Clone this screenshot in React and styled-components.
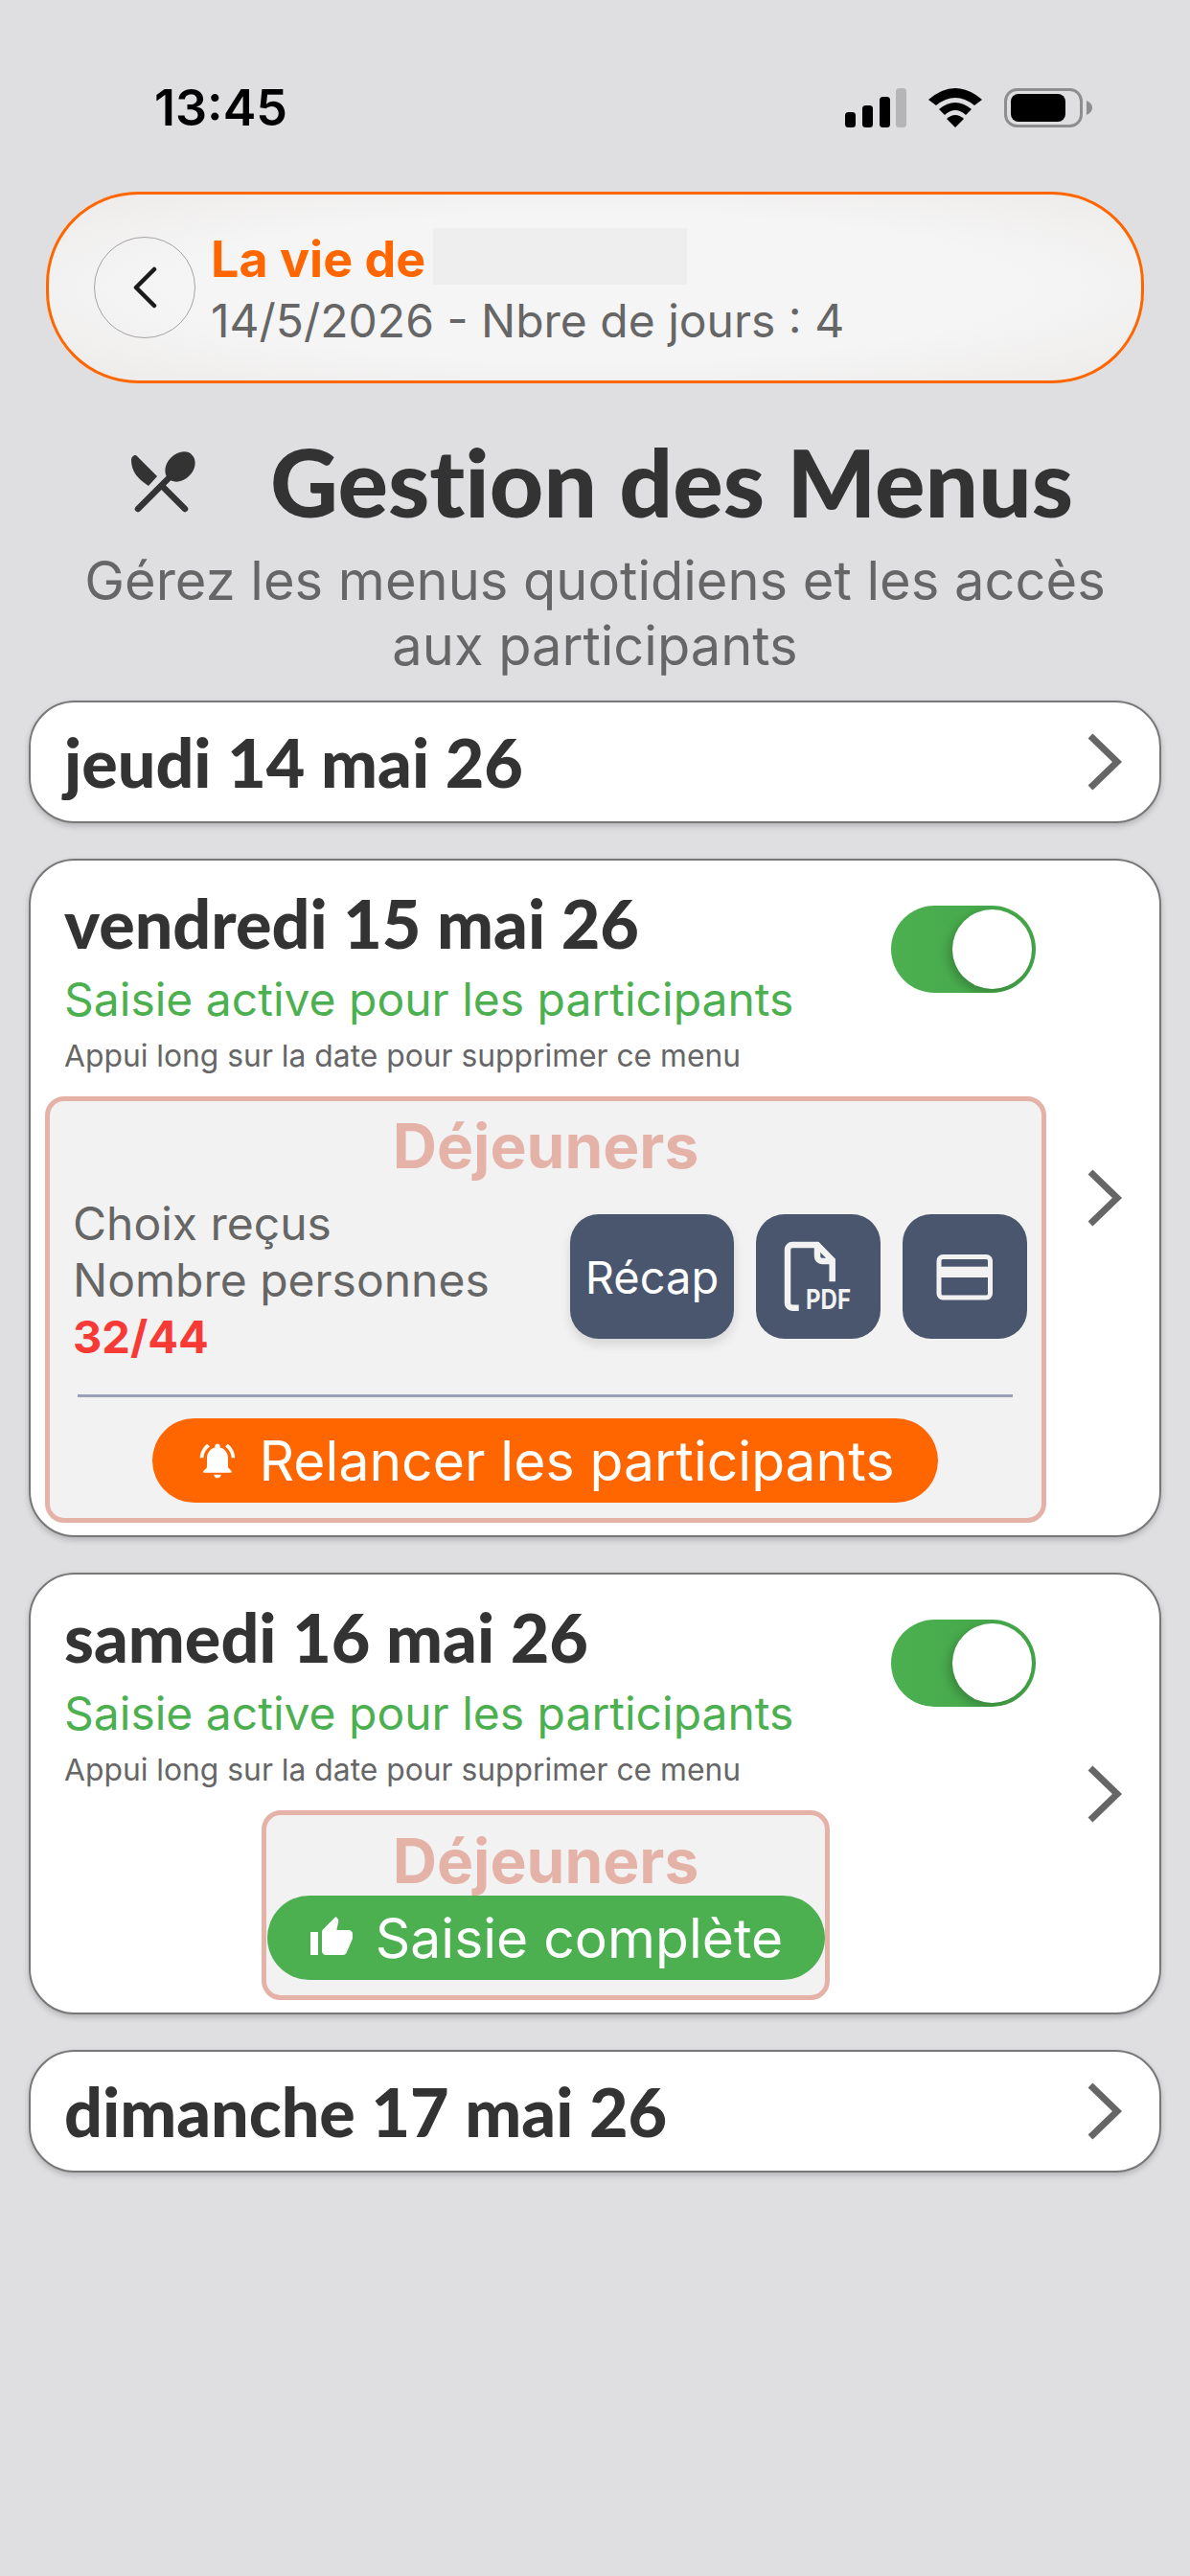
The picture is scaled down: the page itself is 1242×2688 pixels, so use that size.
import React from 'react'
import styled, { createGlobalStyle } from 'styled-components'
import { MdNotificationsActive, MdThumbUp } from 'react-icons/md'

const GlobalCSS = createGlobalStyle`
  * {
    box-sizing: border-box;
  }
  body {
    margin: 0;
    background-color: #dfdfe2;
    font-family: "Inter", "Liberation Sans", sans-serif;
  }
`

const Page = styled.div`
  width: 1242px;
  height: 2688px;
  overflow: hidden;
`

const StatusBar = styled.div`
  height: 200px;
  padding: 88px 102px 0 161px;
  display: flex;
  justify-content: space-between;
  align-items: flex-start;
`

const Time = styled.div`
  font-size: 52px;
  font-weight: 600;
  line-height: 50px;
  color: #000;
`

const StatusIcons = styled.div`
  display: flex;
  gap: 23px;
  padding-top: 4px;
`

const HeaderPill = styled.div`
  width: 1146px;
  height: 200px;
  margin-left: 48px;
  padding-left: 47px;
  display: flex;
  align-items: center;
  gap: 16px;
  border: 3px solid #ff6600;
  border-radius: 96px;
  background: radial-gradient(ellipse at center, #f6f5f5 55%, #ecebea 100%);
`

const BackButton = styled.div`
  width: 106px;
  height: 106px;
  border-radius: 50%;
  border: 1.5px solid #a5a3a3;
  display: flex;
  align-items: center;
  justify-content: center;
`

const HeaderText = styled.div`
  padding-top: 5px;
  display: flex;
  flex-direction: column;
  gap: 13px;
`

const HeaderTitle = styled.div`
  display: flex;
  align-items: center;
  gap: 8px;
  height: 52px;
  font-size: 52px;
  font-weight: 700;
  color: #ff6600;
`

const Redacted = styled.span`
  width: 265px;
  height: 59px;
  margin-top: -6px;
  background: #efeeee;
`

const HeaderSub = styled.div`
  font-size: 48px;
  line-height: 52px;
  color: #666;
`

const TitleRow = styled.div`
  margin-top: 52px;
  height: 100px;
  padding-left: 120px;
  display: flex;
  align-items: center;
  gap: 62px;
  color: #333;
`

const Title = styled.h1`
  margin: 0;
  font-family: "Lato", sans-serif;
  font-size: 98px;
  font-weight: 900;
  line-height: 100px;
  font-variant-ligatures: none;
`

const Subtitle = styled.p`
  margin: 20px 0 0;
  text-align: center;
  font-size: 56px;
  line-height: 68px;
  color: #666;
`

const CardList = styled.div`
  margin: 23px 30px 0;
  display: flex;
  flex-direction: column;
  gap: 37px;
`

const Card = styled.div`
  width: 1182px;
  min-height: 128px;
  display: flex;
  align-items: center;
  border: 2px solid #777;
  border-radius: 48px;
  background: #fff;
  box-shadow: 0 3px 6px rgba(0, 0, 0, 0.2);
`

const CardMain = styled.div`
  width: 1060px;
  padding: ${({ $open }) => ($open ? '27px 0 13px 15px' : '0 0 0 35px')};
`

const CardHead = styled.div`
  padding: 0 11px 0 20px;
  display: flex;
  justify-content: space-between;
  align-items: flex-start;
`

const DateLabel = styled.div`
  font-family: "Lato", sans-serif;
  font-size: 70px;
  font-weight: 900;
  line-height: 76px;
  color: #333;
  font-variant-ligatures: none;
`

const ActiveLabel = styled.div`
  margin-top: 14px;
  font-size: 48px;
  line-height: 56px;
  color: #4caf50;
`

const HintLabel = styled.div`
  margin-top: 11px;
  font-size: 31.8px;
  line-height: 40px;
  color: #666;
`

const Toggle = styled.div`
  width: 151px;
  height: 91px;
  margin-top: 20px;
  padding: 4px;
  display: flex;
  justify-content: flex-end;
  overflow: hidden;
  border-radius: 46px;
  background: linear-gradient(90deg, #4caf50, #43a548);
`

const Knob = styled.div`
  width: 83px;
  height: 83px;
  border-radius: 50%;
  background: #fff;
  box-shadow: -4px 4px 10px rgba(0, 0, 0, 0.2);
`

const MealBox = styled.div`
  width: ${({ $wide }) => ($wide ? '1045px' : '593px')};
  height: ${({ $wide }) => ($wide ? '445px' : '198px')};
  margin: ${({ $wide }) => ($wide ? '22px 0 0' : '22px 0 0 226px')};
  padding: ${({ $wide }) => ($wide ? '12px 15px 0 24px' : '13px 0 0')};
  border: 5px solid #e5b2a8;
  border-radius: 20px;
  background: #f2f2f2;
`

const MealTitle = styled.div`
  font-size: 64px;
  font-weight: 700;
  line-height: 70px;
  text-align: center;
  color: #e5b2a8;
  margin-right: ${({ $wide }) => ($wide ? '9px' : '0')};
`

const MealRow = styled.div`
  margin-top: 16px;
  display: flex;
  justify-content: space-between;
  align-items: flex-start;
`

const Stats = styled.div`
  font-size: 48px;
  line-height: 59px;
  color: #666;
`

const Ratio = styled.div`
  font-size: 47px;
  font-weight: 700;
  line-height: 59px;
  color: #f73a36;
`

const Actions = styled.div`
  margin-top: 20px;
  display: flex;
  gap: 23px;
`

const ActionButton = styled.div`
  width: ${({ $wide }) => ($wide ? '171px' : '130px')};
  height: 130px;
  display: flex;
  align-items: center;
  justify-content: center;
  border-radius: 30px;
  background: #4a566e;
  color: #fff;
  font-size: 47px;
  box-shadow: ${({ $wide }) => ($wide ? '0 6px 12px rgba(0, 0, 0, 0.12)' : 'none')};
`

const Divider = styled.div`
  height: 3px;
  margin: 31px 15px 0 5px;
  background: #9aa0b8;
`

const PillButton = styled.div`
  height: 88px;
  display: flex;
  align-items: center;
  justify-content: center;
  gap: 22px;
  border-radius: 44px;
  color: #fff;
  font-size: 57px;
  background: ${({ $tone }) => ($tone === 'green' ? '#4caf50' : '#ff6600')};
  width: ${({ $tone }) => ($tone === 'green' ? '582px' : '820px')};
  margin: ${({ $tone }) => ($tone === 'green' ? '1px auto 0' : '22px 0 0 83px')};
`

const Chevron = styled.svg`
  display: block;
  margin-left: 41px;
  flex: none;
`

const RightArrow = () => (
  <Chevron width="40" height="60" viewBox="0 0 40 60">
    <path d="M5 3 L33 30 L5 57" fill="none" stroke="#666" strokeWidth="7" />
  </Chevron>
)

const SignalIcon = () => (
  <svg width="64" height="41" viewBox="0 0 64 41">
    <rect x="0" y="25" width="11" height="16" rx="3.5" />
    <rect x="18" y="18" width="11" height="23" rx="3.5" />
    <rect x="36" y="9" width="11" height="32" rx="3.5" />
    <rect x="53" y="0" width="11" height="41" rx="3.5" fill="#b5b5b7" />
  </svg>
)

const WifiIcon = () => (
  <svg width="56" height="41" viewBox="0 0 56 41">
    <path d="M0 12 Q28 -12 56 12 L48 18 Q28 2 8 18 Z" />
    <path d="M11 22 Q28 8 45 22 L39 28 Q28 18 17 28 Z" />
    <path d="M19 32 Q28 24 37 32 L28 41 Z" />
  </svg>
)

const BatteryIcon = () => (
  <svg width="92" height="41" viewBox="0 0 92 41">
    <rect x="1.5" y="1.5" width="79" height="38" rx="12" fill="none" stroke="#8e8e90" strokeWidth="3" />
    <rect x="7" y="6" width="57" height="29" rx="8" />
    <path d="M86 13 C90 15 92 17 92 20.5 C92 24 90 26 86 28 Z" fill="#8e8e90" />
  </svg>
)

const CutleryIcon = () => (
  <svg width="100" height="85" viewBox="0 0 100 85" fill="currentColor">
    <path d="M17 20 C17 17 19 15 22 15 L44 37 L35 47 C24 40 17 32 17 20 Z" />
    <path d="M50 48 L73 71" stroke="currentColor" strokeWidth="6.5" strokeLinecap="round" />
    <path d="M24 71 L58 37" stroke="currentColor" strokeWidth="6.5" strokeLinecap="round" />
    <ellipse cx="68" cy="27" rx="13.5" ry="17.5" transform="rotate(45 68 27)" />
  </svg>
)

const PdfIcon = () => (
  <svg width="130" height="130" viewBox="0 0 130 130">
    <g fill="none" stroke="#f2f2f2" strokeWidth="6.5">
      <path d="M44.7 97.7 H38 a5 5 0 0 1 -5 -5 V37 a5 5 0 0 1 5 -5 H64 L79.7 48 V70.3" />
      <path d="M64 32 V44 a5 5 0 0 0 5 5 H79.7" />
    </g>
    <text x="52" y="98.7" fontFamily="Inter, sans-serif" fontSize="28" fontWeight="700" fill="#f2f2f2" textLength="47" lengthAdjust="spacingAndGlyphs">PDF</text>
  </svg>
)

const CardIcon = () => (
  <svg width="130" height="130" viewBox="0 0 130 130">
    <rect x="38" y="44.5" width="53.5" height="42.5" rx="4" fill="none" stroke="#f2f2f2" strokeWidth="5" />
    <rect x="38" y="54.7" width="54" height="11.3" fill="#f2f2f2" />
  </svg>
)

const DayCard = ({ date }) => (
  <Card>
    <CardMain>
      <DateLabel>{date}</DateLabel>
    </CardMain>
    <RightArrow />
  </Card>
)

const OpenDayCard = ({ date, children }) => (
  <Card>
    <CardMain $open>
      <CardHead>
        <div>
          <DateLabel>{date}</DateLabel>
          <ActiveLabel>Saisie active pour les participants</ActiveLabel>
          <HintLabel>Appui long sur la date pour supprimer ce menu</HintLabel>
        </div>
        <Toggle>
          <Knob />
        </Toggle>
      </CardHead>
      {children}
    </CardMain>
    <RightArrow />
  </Card>
)

export default function App() {
  return (
    <Page>
      <GlobalCSS />
      <StatusBar>
        <Time>13:45</Time>
        <StatusIcons>
          <SignalIcon />
          <WifiIcon />
          <BatteryIcon />
        </StatusIcons>
      </StatusBar>
      <HeaderPill>
        <BackButton>
          <svg width="30" height="44" viewBox="0 0 30 44">
            <path d="M25 3 L6 22 L25 41" fill="none" stroke="#1a1a1a" strokeWidth="4.5" strokeLinecap="round" strokeLinejoin="round" />
          </svg>
        </BackButton>
        <HeaderText>
          <HeaderTitle>
            La vie de
            <Redacted />
          </HeaderTitle>
          <HeaderSub>14/5/2026 - Nbre de jours : 4</HeaderSub>
        </HeaderText>
      </HeaderPill>
      <TitleRow>
        <CutleryIcon />
        <Title>Gestion des Menus</Title>
      </TitleRow>
      <Subtitle>
        Gérez les menus quotidiens et les accès
        <br />
        aux participants
      </Subtitle>
      <CardList>
        <DayCard date="jeudi 14 mai 26" />
        <OpenDayCard date="vendredi 15 mai 26">
          <MealBox $wide>
            <MealTitle $wide>Déjeuners</MealTitle>
            <MealRow>
              <Stats>
                Choix reçus
                <br />
                Nombre personnes
                <Ratio>32/44</Ratio>
              </Stats>
              <Actions>
                <ActionButton $wide>Récap</ActionButton>
                <ActionButton>
                  <PdfIcon />
                </ActionButton>
                <ActionButton>
                  <CardIcon />
                </ActionButton>
              </Actions>
            </MealRow>
            <Divider />
            <PillButton>
              <MdNotificationsActive size={44} />
              Relancer les participants
            </PillButton>
          </MealBox>
        </OpenDayCard>
        <OpenDayCard date="samedi 16 mai 26">
          <MealBox>
            <MealTitle>Déjeuners</MealTitle>
            <PillButton $tone="green">
              <MdThumbUp size={48} />
              Saisie complète
            </PillButton>
          </MealBox>
        </OpenDayCard>
        <DayCard date="dimanche 17 mai 26" />
      </CardList>
    </Page>
  )
}
